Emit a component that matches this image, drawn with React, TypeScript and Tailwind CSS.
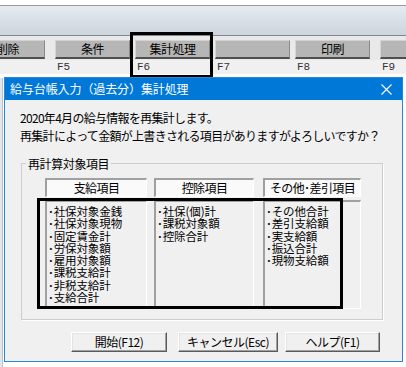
import React from "react";

const jp = "font-['Noto_Sans_CJK_JP','Noto_Sans_CJK_SC',sans-serif]";

function ToolButton({ label, className = "" }: { label?: string; className?: string }) {
  return (
    <div
      className={`w-[75px] h-[19px] shrink-0 flex items-center justify-center bg-[#b6b6b6] border-t border-t-[#d2d2d2] border-l border-l-[#d6d6d6] border-r border-r-[#8a8a8a] border-b-2 border-b-[#4f4f4f] text-[12px] leading-none text-black tracking-[-0.5px] ${className}`}
    >
      {label}
    </div>
  );
}

function FKey({ label, className = "" }: { label: string; className?: string }) {
  return (
    <div className={`w-[75px] shrink-0 pl-[2px] font-['Liberation_Mono',monospace] text-[11px] leading-[14px] text-[#333] ${className}`}>
      {label}
    </div>
  );
}

function Column({ title, items, className = "" }: { title: string; items: string[]; className?: string }) {
  return (
    <div className={`shrink-0 flex flex-col ${className}`}>
      <div className="h-[19px] flex items-center justify-center bg-[#fafafa] border-t-2 border-l-2 border-[#a0a0a0] border-r border-b border-r-white border-b-white text-[12px] leading-none tracking-[-0.6px]">
        {title}
      </div>
      <div className="mt-[3px] h-[109px] bg-[#f0f0f0] border-t-2 border-l-2 border-[#a0a0a0] border-r border-b border-r-white border-b-white pt-[3px] pl-[1px] text-[11.5px] leading-[12.3px] tracking-[-0.1px]">
        {items.map((it) => (
          <div key={it} className="whitespace-nowrap">
            ･{it}
          </div>
        ))}
      </div>
    </div>
  );
}

function DlgButton({ label, className = "" }: { label: string; className?: string }) {
  return (
    <div
      className={`h-[20px] shrink-0 flex items-center justify-center bg-[#f0f0f0] border-t border-l border-white border-r border-b border-r-[#5a5a5a] border-b-[#5a5a5a] shadow-[inset_-1px_-1px_0_#a0a0a0,inset_1px_1px_0_#e3e3e3] text-[12px] leading-none tracking-[-0.5px] ${className}`}
    >
      {label}
    </div>
  );
}

export default function App() {
  return (
    <div className={`relative w-[406px] h-[367px] overflow-hidden bg-[#eef3f8] text-black ${jp}`}>
      {/* window header band */}
      <div className="h-[6px] bg-white border-b border-[#9a9a9a]" />
      <div className="h-[30px] bg-gradient-to-b from-[#e6ebf1] to-[#ccd4dd] border-b border-[#7d858e]" />

      {/* function key toolbar */}
      <div className="h-[24px] pt-[4px] bg-[#e9e9e9] flex">
        <ToolButton label="削除" className="ml-[-30px]" />
        <ToolButton label="条件" className="ml-[10px]" />
        <ToolButton label="集計処理" className="ml-[5px]" />
        <ToolButton className="ml-[5px]" />
        <ToolButton label="印刷" className="ml-[5px]" />
        <ToolButton className="ml-[10px]" />
      </div>
      <div className="h-[14px] bg-[#f0f0f0] flex">
        <FKey label="" className="ml-[-30px]" />
        <FKey label="F5" className="ml-[10px]" />
        <FKey label="F6" className="ml-[5px]" />
        <FKey label="F7" className="ml-[5px]" />
        <FKey label="F8" className="ml-[5px]" />
        <FKey label="F9" className="ml-[10px]" />
      </div>
      <div className="h-[4px] bg-white" />
      <div className="flex h-[289px]">
        <div className="w-[3px] bg-[#dfe6ee] border-r border-[#b9c3cd]" />
        <div className="flex-1 bg-white" />
      </div>

      {/* annotation around 集計処理 */}
      <div className="absolute left-[130px] top-[32px] w-[83px] h-[46px] border-[3px] border-black" />

      {/* dialog window */}
      <div className="absolute left-[4px] top-[77px] w-[399px] h-[285px] border border-[#2c85d4] bg-[#f0f0f0] flex flex-col">
        <div className="h-[22px] shrink-0 bg-[#0078d7] flex items-center pl-[5px] pr-[10px] text-white text-[12px] leading-none">
          <span className="tracking-[-0.1px]">給与台帳入力（過去分）集計処理</span>
          <svg className="ml-auto" width="11" height="11" viewBox="0 0 11 11">
            <path d="M0.5 0.5 L10.5 10.5 M10.5 0.5 L0.5 10.5" stroke="white" strokeWidth="1.1" />
          </svg>
        </div>

        <div className="px-[15px] pt-[9px] flex flex-col">
          <div className="text-[12px] leading-[18px] tracking-[-0.7px] whitespace-nowrap">
            <div>2020年4月の給与情報を再集計します。</div>
            <div>再集計によって金額が上書きされる項目がありますがよろしいですか？</div>
          </div>

          {/* group box */}
          <div className="relative ml-[1px] mt-[18px] w-[362px] h-[157px] border border-[#cdcdcd] shadow-[1px_1px_0_#ffffff] pt-[14px] pl-[23px] flex">
            <div className="absolute left-[4px] top-[-8px] px-[2px] bg-[#f0f0f0] text-[12px] leading-[16px] tracking-[-0.4px]">
              再計算対象項目
            </div>
            <Column
              title="支給項目"
              className="w-[102px]"
              items={["社保対象金銭", "社保対象現物", "固定賃金計", "労保対象額", "雇用対象額", "課税支給計", "非税支給計", "支給合計"]}
            />
            <Column title="控除項目" className="w-[100px] ml-[7px]" items={["社保(個)計", "課税対象額", "控除合計"]} />
            <Column
              title="その他･差引項目"
              className="w-[98px] ml-[9px]"
              items={["その他合計", "差引支給額", "実支給額", "振込合計", "現物支給額"]}
            />
            {/* annotation around lists */}
            <div className="absolute left-[15px] top-[34px] w-[306px] h-[111px] border-[3px] border-black" />
          </div>

          <div className="mt-[12px] flex">
            <DlgButton label="開始(F12)" className="w-[96px] ml-[51px]" />
            <DlgButton label="キャンセル(Esc)" className="w-[100px] ml-[11px]" />
            <DlgButton label="ヘルプ(F1)" className="w-[95px] ml-[7px]" />
          </div>
        </div>
      </div>
    </div>
  );
}
